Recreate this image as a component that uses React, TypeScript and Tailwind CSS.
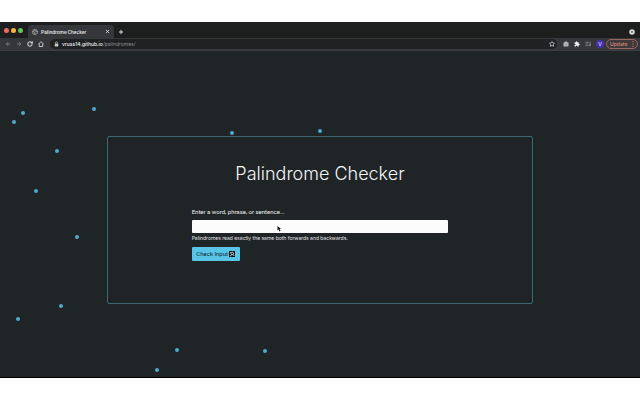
import type { ReactNode } from "react";
import { ArrowLeft, ArrowRight, Plus, RotateCw, Star, X, ListMusic } from "lucide-react";

const particles = [
  { x: 22, y: 61 },
  { x: 13, y: 70 },
  { x: 93, y: 57 },
  { x: 56, y: 99 },
  { x: 35, y: 139 },
  { x: 76, y: 185 },
  { x: 60, y: 254 },
  { x: 17, y: 267 },
  { x: 176, y: 298 },
  { x: 156, y: 318 },
  { x: 264, y: 299 },
  { x: 231, y: 81 },
  { x: 319, y: 79 },
];

function IconButton({ label, className = "", children }: { label: string; className?: string; children: ReactNode }) {
  return (
    <button type="button" aria-label={label} className={`flex shrink-0 items-center justify-center ${className}`}>
      {children}
    </button>
  );
}

function TabStrip() {
  return (
    <div className="flex h-4 items-end bg-[#1d1f1f] pl-1">
      <div className="flex h-4 w-6 items-center gap-0.5">
        <span className="size-[5px] rounded-full bg-[#ed6a5e]" />
        <span className="size-[5px] rounded-full bg-[#f0b83f]" />
        <span className="size-[5px] rounded-full bg-[#61c454]" />
      </div>
      <div className="flex h-[13px] w-[86px] items-center rounded-t-sm bg-[#35373a] px-1 text-[#e2e3e4]">
        <svg viewBox="0 0 12 12" className="size-1.5 shrink-0" fill="none" stroke="#b5b7ba" strokeWidth="1.4">
          <circle cx="6" cy="6" r="5" />
          <path d="M1 5l4 1 1 2-1 3M5 1l1 3 5 1" />
        </svg>
        <span className="flex-1 pl-[3px] font-['Roboto','Liberation_Sans',sans-serif] text-[5px] leading-[8px] font-medium">
          Palindrome Checker
        </span>
        <IconButton label="Close tab">
          <X className="size-[5px]" strokeWidth={4} />
        </IconButton>
      </div>
      <IconButton label="New tab" className="ml-1 h-[13px] text-[#d5d6d7]">
        <Plus className="size-1.5" strokeWidth={4} />
      </IconButton>
      <IconButton label="Search tabs" className="mr-[5px] ml-auto h-[13px]">
        <svg viewBox="0 0 12 12" className="size-1.5">
          <circle cx="6" cy="6" r="5.5" fill="#d8d9da" />
          <path d="M3.500 5l2.500 3 2.500-3z" fill="#1d1f1f" />
        </svg>
      </IconButton>
    </div>
  );
}

function Toolbar() {
  return (
    <div className="flex h-[13px] items-center border-b border-[#3b3d3f] bg-[#35373a] pr-0.5 pl-[5px] text-[#e2e3e4]">
      <div className="flex w-[45px] items-center gap-[5px]">
        <IconButton label="Back" className="text-[#85878a]">
          <ArrowLeft className="size-1.5" strokeWidth={3} />
        </IconButton>
        <IconButton label="Forward" className="text-[#85878a]">
          <ArrowRight className="size-1.5" strokeWidth={3} />
        </IconButton>
        <IconButton label="Reload">
          <RotateCw className="size-1.5" strokeWidth={4} />
        </IconButton>
        <IconButton label="Home">
          <svg viewBox="0 0 12 12" className="size-1.5" fill="none" stroke="currentColor" strokeWidth="1.600">
            <path d="M.8 6.500L6 1.300l5.200 5.200M2.500 5.500v5.500h7V5.500" />
          </svg>
        </IconButton>
      </div>
      <div className="flex h-2.5 flex-1 items-center rounded-full bg-[#1f2123] pr-0.5 pl-1">
        <svg viewBox="0 0 10 12" className="h-1.5 w-[5px] shrink-0" aria-hidden="true">
          <path d="M3 5V3.500a2 2 0 0 1 4 0V5" fill="none" stroke="#c9cacb" strokeWidth="1.300" />
          <rect x="1.500" y="5" width="7" height="6" rx="1" fill="#c9cacb" />
        </svg>
        <span className="flex-1 pl-[3px] text-[5px] leading-[8px] text-[#8d8f92]">
          <span className="font-medium text-[#eeeeef]">vruss14.github.io</span>/palindromes/
        </span>
        <IconButton label="Bookmark this page">
          <Star className="size-1.5" strokeWidth={3} />
        </IconButton>
      </div>
      <div className="flex items-center gap-[5px] pl-1.5">
        <IconButton label="Screenshot">
          <svg viewBox="0 0 12 12" className="size-1.5" fill="#b4b7b8">
            <path d="M1 3h2l1-2h4l1 2h2v8H1z" />
            <circle cx="6" cy="7" r="2" fill="#9da1a3" />
          </svg>
        </IconButton>
        <IconButton label="Extensions">
          <svg viewBox="0 0 24 24" className="size-1.5" fill="#f1f1f1">
            <path d="M20.500 11H19V7a2 2 0 0 0-2-2h-4V3.500a2.500 2.500 0 0 0-5 0V5H4a2 2 0 0 0-2 2v3.800h1.500a2.700 2.700 0 0 1 0 5.400H2V20a2 2 0 0 0 2 2h3.800v-1.500a2.700 2.700 0 0 1 5.400 0V22H17a2 2 0 0 0 2-2v-4h1.500a2.500 2.500 0 0 0 0-5z" />
          </svg>
        </IconButton>
        <IconButton label="Media controls" className="text-[#8b8d90]">
          <ListMusic className="size-1.5" strokeWidth={3} />
        </IconButton>
        <button type="button" className="size-2 rounded-full bg-[#4a2fb5] text-center text-[5px] leading-[8px] text-white">
          V
        </button>
      </div>
      <button
        type="button"
        className="ml-0.5 flex h-2.5 w-8 items-center justify-between rounded-full border border-[#9c6660] bg-[#40383a] px-[3px] text-[5px] leading-[8px] font-medium text-[#d78b83]"
      >
        Update
        <svg viewBox="0 0 2 8" className="h-1.5 w-0.5" fill="currentColor">
          <circle cx="1" cy="1" r="0.8" />
          <circle cx="1" cy="4" r="0.8" />
          <circle cx="1" cy="7" r="0.8" />
        </svg>
      </button>
    </div>
  );
}

function Particles() {
  return (
    <div aria-hidden="true">
      {particles.map((p) => (
        <span
          key={`${p.x}-${p.y}`}
          className="absolute size-1 rounded-full bg-[#4fa9c9]"
          style={{ left: `${(p.x - 1.5) / 6.4}%`, top: p.y - 1.5 }}
        />
      ))}
    </div>
  );
}

function Checker() {
  return (
    <section className="relative mx-auto w-2/3 rounded-xs border border-[#3a6875] px-[84px] pt-6 pb-[42px]">
      <h1 className="text-center text-[18px] leading-[26px] font-light text-[#f5f6f6]">Palindrome Checker</h1>
      <form className="pt-5" onSubmit={(e) => e.preventDefault()}>
        <label
          htmlFor="phrase"
          className="block font-['Roboto','Liberation_Sans',sans-serif] text-[6px] leading-[10px] text-[#eeefef]"
        >
          Enter a word, phrase, or sentence...
        </label>
        <div className="relative mt-[3px]">
          <input
            id="phrase"
            type="text"
            aria-describedby="phrase-help"
            className="block h-[13px] w-full rounded-[1px] bg-[#fcfcfc] px-1 text-[6px] text-black outline-none"
          />
          <svg viewBox="0 0 8 12" className="absolute top-1.5 left-1/3 h-1.5 w-1" aria-hidden="true">
            <path d="M1 0v9l2-2 2 4 2-1-2-4h3z" fill="#111" />
          </svg>
        </div>
        <p id="phrase-help" className="mt-px text-[5px] leading-[8px] text-[#e4e5e6]">
          Palindromes read exactly the same both forwards and backwards.
        </p>
        <button
          type="submit"
          className="mt-[5px] flex h-3.5 w-12 items-center justify-center gap-px rounded-[1px] bg-[#58c4e6] font-['Roboto','Liberation_Sans',sans-serif] text-[6px] leading-[10px] whitespace-nowrap text-[#10262e]"
        >
          Check Input
          <svg viewBox="0 0 12 12" className="size-1.5" aria-hidden="true">
            <rect width="12" height="12" rx="1" fill="#05090b" />
            <circle cx="6.500" cy="5" r="2.500" fill="none" stroke="#fff" strokeWidth="1.600" />
            <path d="M8 7l2.500 3M1.500 3h2M1.500 9.500h3.500" stroke="#fff" strokeWidth="1.600" />
          </svg>
        </button>
      </form>
    </section>
  );
}

export default function App() {
  return (
    <div className="bg-white py-[22px] font-['Inter','Liberation_Sans',sans-serif]">
      <header>
        <TabStrip />
        <Toolbar />
      </header>
      <main className="relative border-b border-black bg-[#1f2426] pt-[85px] pb-[73px]">
        <Particles />
        <Checker />
      </main>
    </div>
  );
}
